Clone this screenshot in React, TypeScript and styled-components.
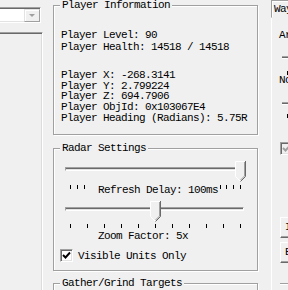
import React from "react";
import styled, { createGlobalStyle } from "styled-components";

const GlobalStyle = createGlobalStyle`
  html, body {
    margin: 0;
    padding: 0;
    background: #f0f0f0;
  }
  body {
    font-family: "Liberation Mono", "DejaVu Sans Mono", monospace;
    font-size: 11px;
    letter-spacing: -0.6px;
    color: #000;
  }
`;

const Window = styled.div`
  display: flex;
  width: 288px;
  height: 290px;
  overflow: hidden;
  background: #f0f0f0;
`;

// left column: combo + list panel
const LeftCol = styled.div`
  flex: none;
  width: 43px;
  margin-right: 10px;
  display: flex;
  flex-direction: column;
`;

const Combo = styled.div`
  margin-top: 7px;
  width: 41px;
  height: 16px;
  box-sizing: border-box;
  border-top: 1px solid #a0a0a0;
  border-right: 1px solid #fff;
  border-bottom: 1px solid #fff;
  box-shadow: inset 0 1px 0 #696969, inset -1px -1px 0 #e3e3e3;
  background: #fff;
  display: flex;
  justify-content: flex-end;
  align-items: flex-start;
  padding-top: 1px;
`;

const DropButton = styled.div`
  width: 16px;
  height: 13px;
  box-sizing: border-box;
  background: #f0f0f0;
  border: 1px solid;
  border-color: #e3e3e3 #a0a0a0 #a0a0a0 #e3e3e3;
  box-shadow: inset 1px 1px 0 #fff;
  display: flex;
  align-items: center;
  justify-content: center;
`;

const Arrow = styled.div<{ $color: string }>`
  width: 0;
  height: 0;
  border-left: 3px solid transparent;
  border-right: 3px solid transparent;
  border-top: 3px solid ${(p) => p.$color};
`;

const SunkenPanel = styled.div`
  margin-top: 9px;
  flex: 1;
  border-top: 1px solid #a0a0a0;
  border-right: 1px solid #fff;
  box-shadow: inset 0 1px 0 #696969, inset -1px 0 0 #dcdcdc;
`;

// middle column with the group boxes
const MidCol = styled.div`
  flex: none;
  width: 205px;
  margin-right: 13px;
  display: flex;
  flex-direction: column;
`;

const Group = styled.div<{ $top: number; $height: number }>`
  position: relative;
  flex: none;
  box-sizing: border-box;
  margin-top: ${(p) => p.$top}px;
  height: ${(p) => p.$height}px;
  border: 1px solid #a0a0a0;
  box-shadow: inset 1px 1px 0 #fff, 1px 1px 0 #fff;
  display: flex;
  flex-direction: column;
`;

const GroupTitle = styled.span`
  position: absolute;
  top: -7px;
  left: 6px;
  padding: 0 2px;
  line-height: 12px;
  background: #f0f0f0;
  white-space: nowrap;
`;

const InfoLine = styled.div<{ $gap?: number }>`
  margin-top: ${(p) => p.$gap ?? 0}px;
  padding-left: 7px;
  line-height: 10.7px;
  white-space: nowrap;
`;

const Slider = styled.div<{ $top: number }>`
  position: relative;
  height: 21px;
  margin: ${(p) => p.$top}px 13px 0 11px;
`;

const Track = styled.div`
  margin-top: 6px;
  height: 4px;
  box-sizing: border-box;
  border-top: 1px solid #a0a0a0;
  border-left: 1px solid #a0a0a0;
  border-bottom: 1px solid #fff;
  border-right: 1px solid #fff;
  background: #e3e3e3;
  box-shadow: inset 0 1px 0 #696969;
`;

const ThumbBox = styled.svg`
  position: absolute;
  top: 0;
  display: block;
`;

const TickStack = styled.div<{ $top: number }>`
  display: grid;
  margin: ${(p) => p.$top}px 13px 0 11px;
  height: 12px;
  & > * {
    grid-area: 1 / 1;
  }
`;

const TickSvg = styled.svg<{ $top: number }>`
  display: block;
  margin-top: ${(p) => p.$top}px;
`;

const TickRow = styled.div<{ $top: number }>`
  margin: ${(p) => p.$top}px 13px 0 11px;
`;

const SliderCaption = styled.span`
  justify-self: start;
  margin-left: 23px;
  padding: 0 2px 0 10px;
  line-height: 12px;
  background: #f0f0f0;
  white-space: nowrap;
`;

const Caption = styled.div<{ $top: number }>`
  margin-top: ${(p) => p.$top}px;
  padding-left: 44px;
  line-height: 12px;
  white-space: nowrap;
`;

const CheckRow = styled.div<{ $top: number }>`
  display: flex;
  align-items: center;
  gap: 5px;
  margin-top: ${(p) => p.$top}px;
  padding-left: 6px;
  height: 13px;
  white-space: nowrap;
`;

const CheckBox = styled.div<{ $disabled?: boolean }>`
  flex: none;
  width: 13px;
  height: 13px;
  box-sizing: border-box;
  border: 1px solid;
  border-color: #a0a0a0 #fff #fff #a0a0a0;
  box-shadow: inset 1px 1px 0 #696969, inset -1px -1px 0 #e3e3e3;
  background: ${(p) => (p.$disabled ? "#f0f0f0" : "#fff")};
  display: flex;
  align-items: center;
  justify-content: center;
`;

// right column: tab control, cut off by the window edge
const RightCol = styled.div`
  flex: none;
  width: 120px;
  display: flex;
  flex-direction: column;
`;

const TabStrip = styled.div`
  display: flex;
  height: 17px;
`;

const Tab = styled.div`
  box-sizing: border-box;
  height: 18px;
  padding: 0 6px 0 2px;
  border: 1px solid;
  border-color: #a0a0a0 #696969 transparent #a0a0a0;
  box-shadow: inset 1px 1px 0 #fff;
  background: #f0f0f0;
  line-height: 16px;
  white-space: nowrap;
  position: relative;
  z-index: 1;
`;

const TabPage = styled.div`
  flex: 1;
  display: flex;
  flex-direction: column;
  border-top: 1px solid #fff;
  border-left: 1px solid #fff;
`;

const PageLabel = styled.div<{ $top: number; $lh?: number }>`
  margin-top: ${(p) => p.$top}px;
  padding-left: 7px;
  line-height: ${(p) => p.$lh ?? 12}px;
  white-space: nowrap;
`;

const PageTrack = styled(Track)<{ $top: number }>`
  margin: ${(p) => p.$top}px 0 0 10px;
  height: 3px;
  border-left: none;
`;

const PageTicks = styled.svg<{ $top: number }>`
  display: block;
  margin: ${(p) => p.$top}px 0 0 10px;
`;

const PageCheck = styled(CheckBox)<{ $top: number }>`
  margin: ${(p) => p.$top}px 0 0 8px;
`;

const Button = styled.div<{ $top: number }>`
  margin: ${(p) => p.$top}px 0 0 8px;
  height: 21px;
  box-sizing: border-box;
  border: 1px solid;
  border-color: #fff #696969 #696969 #fff;
  box-shadow: inset -1px -1px 0 #a0a0a0;
  padding-left: 4px;
  line-height: 19px;
  white-space: nowrap;
`;

const PageGroupLine = styled.div<{ $top: number }>`
  margin: ${(p) => p.$top}px 0 0 8px;
  border-top: 1px solid #a0a0a0;
  box-shadow: 0 1px 0 #fff;
`;

const TRACK_W = 178;

function Thumb({ frac }: { frac: number }) {
  return (
    <ThumbBox width={11} height={21} style={{ left: Math.round(frac * 170) }}>
      <polygon points="0,0 11,0 11,15.5 5.5,21 0,15.5" fill="#f0f0f0" />
      <polyline points="5.5,20.5 0.5,15.5 0.5,0.5 10,0.5" fill="none" stroke="#fff" />
      <polyline points="10.5,0 10.5,15.5 5.5,20.5" fill="none" stroke="#696969" />
      <polyline points="9.5,1 9.5,15 5.5,19" fill="none" stroke="#a0a0a0" />
    </ThumbBox>
  );
}

function Ticks({ count, top }: { count: number; top: number }) {
  const xs = Array.from({ length: count }, (_, i) => Math.round(5 + (i * 170) / (count - 1)) + 0.5);
  return (
    <TickSvg $top={top} width={TRACK_W} height={4}>
      {xs.map((x) => (
        <line key={x} x1={x} x2={x} y1={0} y2={4} stroke="#000" />
      ))}
    </TickSvg>
  );
}

function Check({ color }: { color: string }) {
  return (
    <svg width={9} height={9} viewBox="0 0 9 9">
      <polyline points="1,4 3.5,6.5 8,1.5" fill="none" stroke={color} strokeWidth={1.9} />
    </svg>
  );
}

export default function App() {
  return (
    <>
      <GlobalStyle />
      <Window>
        <LeftCol>
          <Combo>
            <DropButton>
              <Arrow $color="#a0a0a0" />
            </DropButton>
          </Combo>
          <SunkenPanel />
        </LeftCol>

        <MidCol>
          <Group $top={5} $height={130}>
            <GroupTitle>Player Information</GroupTitle>
            <InfoLine $gap={24}>Player Level: 90</InfoLine>
            <InfoLine $gap={1}>Player Health: 14518 / 14518</InfoLine>
            <InfoLine $gap={17.6}>Player X: -268.3141</InfoLine>
            <InfoLine>Player Y: 2.799224</InfoLine>
            <InfoLine>Player Z: 694.7906</InfoLine>
            <InfoLine>Player ObjId: 0x103067E4</InfoLine>
            <InfoLine>Player Heading (Radians): 5.75R</InfoLine>
          </Group>

          <Group $top={13} $height={123}>
            <GroupTitle>Radar Settings</GroupTitle>
            <Slider $top={12}>
              <Track />
              <Thumb frac={1} />
            </Slider>
            <TickStack $top={2}>
              <Ticks count={26} top={1} />
              <SliderCaption>Refresh Delay: 100ms</SliderCaption>
            </TickStack>
            <Slider $top={5}>
              <Track />
              <Thumb frac={0.5} />
            </Slider>
            <TickRow $top={2}>
              <Ticks count={11} top={0} />
            </TickRow>
            <Caption $top={1.5}>Zoom Factor: 5x</Caption>
            <CheckRow $top={7.5}>
              <CheckBox>
                <Check color="#000" />
              </CheckBox>
              Visible Units Only
            </CheckRow>
          </Group>

          <Group $top={12} $height={60}>
            <GroupTitle>Gather/Grind Targets</GroupTitle>
          </Group>
        </MidCol>

        <RightCol>
          <TabStrip>
            <Tab>Waypoints</Tab>
          </TabStrip>
          <TabPage>
            <PageLabel $top={11}>Arrive Distance</PageLabel>
            <PageTrack $top={15} />
            <PageTicks $top={12} width={60} height={4}>
              <line x1={5.5} x2={5.5} y1={0} y2={4} stroke="#000" />
            </PageTicks>
            <PageLabel $top={0} $lh={10}>Node Distance</PageLabel>
            <PageTrack $top={17} />
            <PageTicks $top={9} width={60} height={4}>
              <line x1={5.5} x2={5.5} y1={0} y2={4} stroke="#000" />
            </PageTicks>
            <PageCheck $top={24} $disabled>
              <Check color="#a0a0a0" />
            </PageCheck>
            <Button $top={62}>Import</Button>
            <Button $top={4}>Export</Button>
            <PageGroupLine $top={20} />
          </TabPage>
        </RightCol>
      </Window>
    </>
  );
}
